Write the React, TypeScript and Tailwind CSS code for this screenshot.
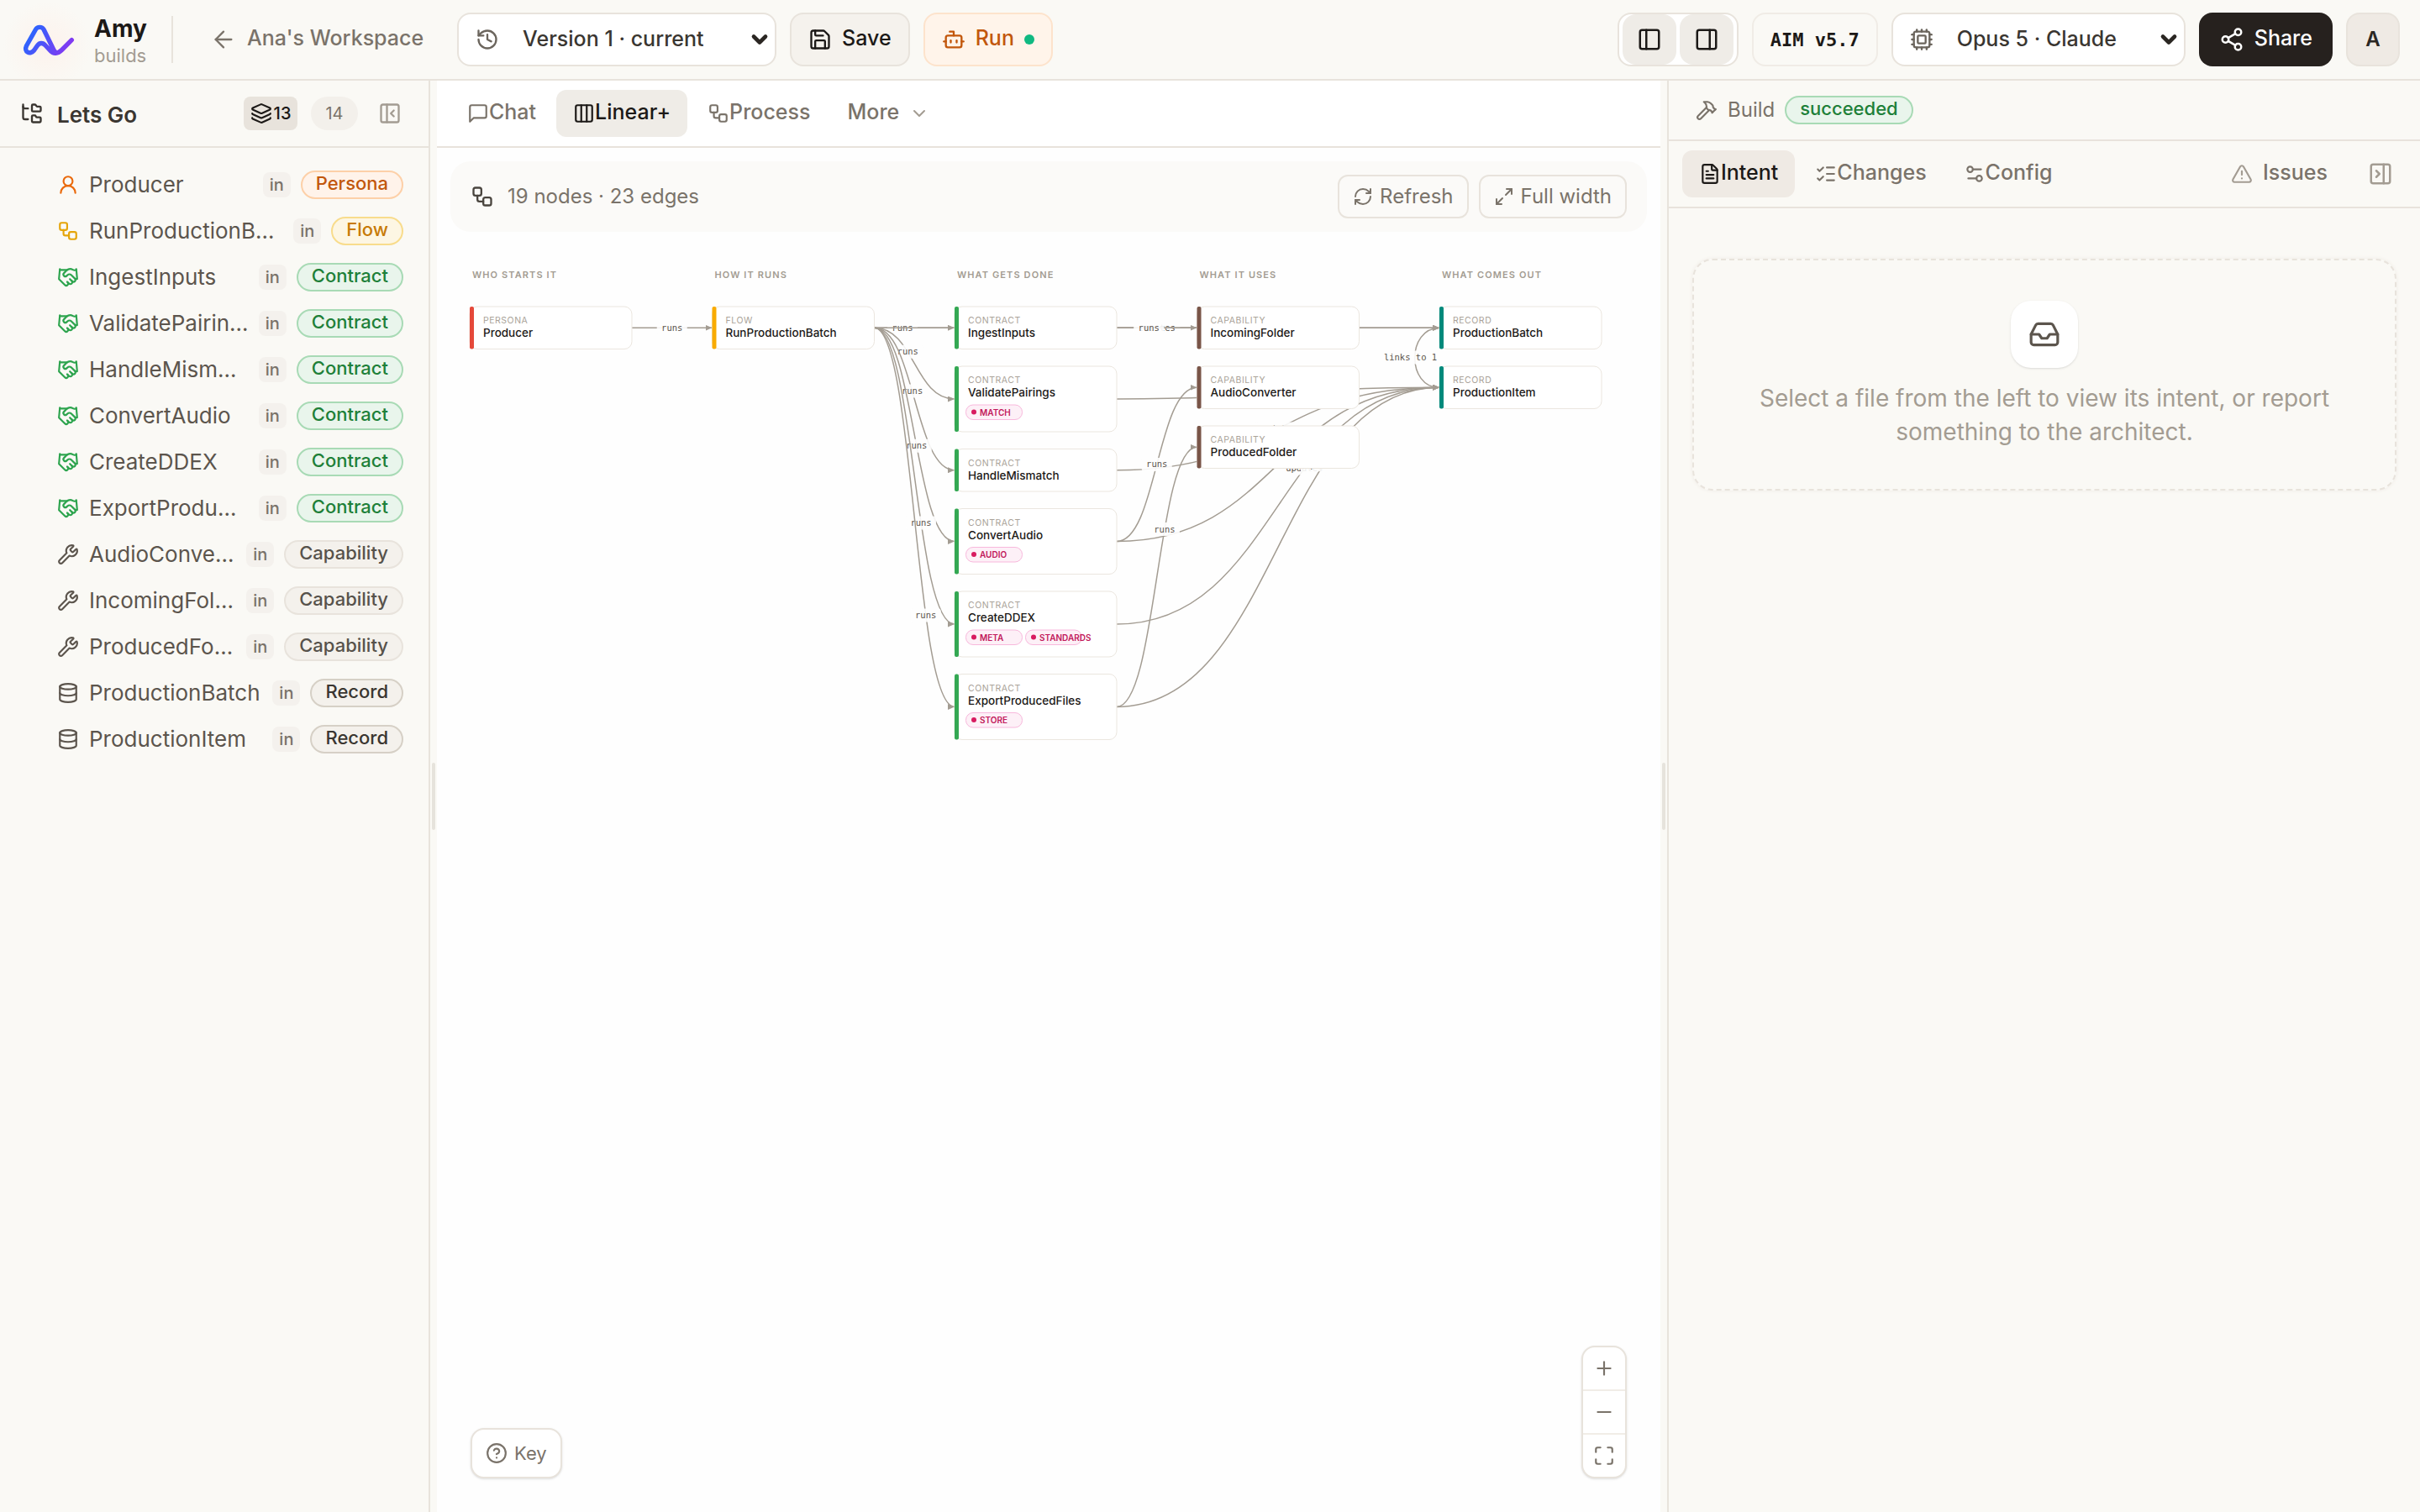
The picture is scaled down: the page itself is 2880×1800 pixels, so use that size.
import type { ReactNode } from "react";
import {
  ArrowLeft,
  Bot,
  ChevronDown,
  CircleHelp,
  Columns3,
  Cpu,
  Database,
  FileText,
  FolderTree,
  Hammer,
  Handshake,
  History,
  Inbox,
  Layers,
  ListChecks,
  Maximize,
  Maximize2,
  Minus,
  PanelLeft,
  PanelLeftClose,
  PanelRight,
  PanelRightClose,
  Plus,
  RefreshCw,
  Save,
  Settings2,
  Share2,
  TriangleAlert,
  UserRound,
  Workflow,
  Wrench,
} from "lucide-react";
import type { LucideIcon } from "lucide-react";

type Kind = "Persona" | "Flow" | "Contract" | "Capability" | "Record";

const KINDS: Record<Kind, { icon: LucideIcon; iconClass: string; badge: string; accent: string }> = {
  Persona: {
    icon: UserRound,
    iconClass: "text-[#ea6a0c]",
    badge: "border-[#fdd0a8] bg-[#fff3ea] text-[#c2570c]",
    accent: "#e5493a",
  },
  Flow: {
    icon: Workflow,
    iconClass: "text-[#e5a50a]",
    badge: "border-[#f8dc8c] bg-[#fdf6e3] text-[#c77a06]",
    accent: "#f9ab00",
  },
  Contract: {
    icon: Handshake,
    iconClass: "text-[#2da44e]",
    badge: "border-[#a8dab5] bg-[#e9f5ec] text-[#1e8039]",
    accent: "#34a853",
  },
  Capability: {
    icon: Wrench,
    iconClass: "text-[#5c554d]",
    badge: "border-[#e8e3dc] bg-[#f4f1ec] text-[#57524b]",
    accent: "#795548",
  },
  Record: {
    icon: Database,
    iconClass: "text-[#5c554d]",
    badge: "border-[#d6d0c6] bg-[#f4f1ec] text-[#3a3631]",
    accent: "#00897b",
  },
};

const FILES: { name: string; kind: Kind }[] = [
  { name: "Producer", kind: "Persona" },
  { name: "RunProductionBatch", kind: "Flow" },
  { name: "IngestInputs", kind: "Contract" },
  { name: "ValidatePairings", kind: "Contract" },
  { name: "HandleMismatch", kind: "Contract" },
  { name: "ConvertAudio", kind: "Contract" },
  { name: "CreateDDEX", kind: "Contract" },
  { name: "ExportProducedFiles", kind: "Contract" },
  { name: "AudioConverter", kind: "Capability" },
  { name: "IncomingFolder", kind: "Capability" },
  { name: "ProducedFolder", kind: "Capability" },
  { name: "ProductionBatch", kind: "Record" },
  { name: "ProductionItem", kind: "Record" },
];

/* ---------- graph data, in viewBox units ---------- */

const COL_X = [78, 655, 1232, 1809, 2386];
const COL_TITLES = ["WHO STARTS IT", "HOW IT RUNS", "WHAT GETS DONE", "WHAT IT USES", "WHAT COMES OUT"];
const NODE_W = 386;
const SHORT = 101;
const TALL = 156;

type GraphNode = { id: string; kind: Kind; col: number; y: number; tags?: string[] };

const NODES: GraphNode[] = [
  { id: "Producer", kind: "Persona", col: 0, y: 178 },
  { id: "RunProductionBatch", kind: "Flow", col: 1, y: 178 },
  { id: "IngestInputs", kind: "Contract", col: 2, y: 178 },
  { id: "ValidatePairings", kind: "Contract", col: 2, y: 320, tags: ["MATCH"] },
  { id: "HandleMismatch", kind: "Contract", col: 2, y: 517 },
  { id: "ConvertAudio", kind: "Contract", col: 2, y: 659, tags: ["AUDIO"] },
  { id: "CreateDDEX", kind: "Contract", col: 2, y: 856, tags: ["META", "STANDARDS"] },
  { id: "ExportProducedFiles", kind: "Contract", col: 2, y: 1053, tags: ["STORE"] },
  { id: "IncomingFolder", kind: "Capability", col: 3, y: 178 },
  { id: "AudioConverter", kind: "Capability", col: 3, y: 320 },
  { id: "ProducedFolder", kind: "Capability", col: 3, y: 462 },
  { id: "ProductionBatch", kind: "Record", col: 4, y: 178 },
  { id: "ProductionItem", kind: "Record", col: 4, y: 320 },
];

// t is where along the curve the label sits
type Edge = { from: string; to: string; label: string; t: number };

const EDGES: Edge[] = [
  { from: "Producer", to: "RunProductionBatch", label: "runs", t: 0.5 },
  { from: "RunProductionBatch", to: "IngestInputs", label: "runs", t: 0.31 },
  { from: "RunProductionBatch", to: "ValidatePairings", label: "runs", t: 0.39 },
  { from: "RunProductionBatch", to: "HandleMismatch", label: "runs", t: 0.463 },
  { from: "RunProductionBatch", to: "ConvertAudio", label: "runs", t: 0.535 },
  { from: "RunProductionBatch", to: "CreateDDEX", label: "runs", t: 0.607 },
  { from: "RunProductionBatch", to: "ExportProducedFiles", label: "runs", t: 0.68 },
  { from: "RunProductionBatch", to: "ProductionBatch", label: "creates", t: 0.5 },
  { from: "IngestInputs", to: "ProductionBatch", label: "updates", t: 0.6 },
  { from: "IngestInputs", to: "IncomingFolder", label: "runs", t: 0.37 },
  { from: "ValidatePairings", to: "ProductionItem", label: "updates", t: 0.5 },
  { from: "HandleMismatch", to: "ProductionItem", label: "updates", t: 0.5 },
  { from: "ConvertAudio", to: "ProductionItem", label: "updates", t: 0.55 },
  { from: "ConvertAudio", to: "AudioConverter", label: "runs", t: 0.5 },
  { from: "CreateDDEX", to: "ProductionItem", label: "updates", t: 0.607 },
  { from: "ExportProducedFiles", to: "ProductionItem", label: "updates", t: 0.68 },
  { from: "ExportProducedFiles", to: "ProducedFolder", label: "runs", t: 0.625 },
];

const nodeHeight = (n: GraphNode) => (n.tags ? TALL : SHORT);
const nodeMid = (n: GraphNode) => n.y + nodeHeight(n) / 2;
const findNode = (id: string) => NODES.find((n) => n.id === id)!;

function EdgeLabel({ x, y, text }: { x: number; y: number; text: string }) {
  const w = text.length * 13 + 20;
  return (
    <g>
      <rect x={x - w / 2} y={y - 16} width={w} height={32} rx={6} fill="#fefefe" fillOpacity={0.9} />
      <text
        x={x}
        y={y + 7}
        textAnchor="middle"
        fill="#5c554d"
        className="font-['DejaVu_Sans_Mono',monospace] text-[21px]"
      >
        {text}
      </text>
    </g>
  );
}

function EdgePath({ edge }: { edge: Edge }) {
  const a = findNode(edge.from);
  const b = findNode(edge.to);
  const x1 = COL_X[a.col] + NODE_W;
  const x2 = COL_X[b.col];
  const y1 = nodeMid(a);
  const y2 = nodeMid(b);
  const mx = (x1 + x2) / 2;
  const { t } = edge;
  const lx = x1 + (x2 - x1) * (1.5 * t * (1 - t) + t ** 3);
  const ly = y1 + (y2 - y1) * (3 * t ** 2 - 2 * t ** 3);
  return (
    <g>
      <path
        d={`M${x1} ${y1} C${mx} ${y1} ${mx} ${y2} ${x2} ${y2}`}
        fill="none"
        stroke="#a39c92"
        strokeWidth={3}
        markerEnd="url(#arrow)"
      />
      <EdgeLabel x={lx} y={ly} text={edge.label} />
    </g>
  );
}

function NodeCard({ node }: { node: GraphNode }) {
  const x = COL_X[node.col];
  const h = nodeHeight(node);
  return (
    <g>
      <rect x={x} y={node.y} width={NODE_W} height={h} rx={18} fill="#fff" stroke="#ebe6df" strokeWidth={2} />
      <rect x={x} y={node.y} width={10} height={h} rx={4} fill={KINDS[node.kind].accent} />
      <text x={x + 32} y={node.y + 40} fill="#aaa399" className="text-[21px] tracking-wider">
        {node.kind.toUpperCase()}
      </text>
      <text x={x + 32} y={node.y + 72} fill="#1c1917" className="text-[27px] font-medium">
        {node.id}
      </text>
      {node.tags?.map((tag, i) => (
        <g key={tag}>
          <rect
            x={x + 27 + i * 142}
            y={node.y + 92}
            width={134}
            height={35}
            rx={17}
            fill="#fdf0f7"
            stroke="#f8b8dc"
            strokeWidth={2}
          />
          <circle cx={x + 46 + i * 142} cy={node.y + 109} r={6} fill="#d81b60" />
          <text x={x + 60 + i * 142} y={node.y + 117} fill="#c2185b" className="text-[20px] font-semibold">
            {tag}
          </text>
        </g>
      ))}
    </g>
  );
}

function Graph() {
  return (
    <svg viewBox="0 0 2912 1300" className="block w-full" role="img" aria-label="Build graph">
      <defs>
        <marker
          id="arrow"
          viewBox="0 0 16 14"
          refX="16"
          refY="7"
          markerWidth="16"
          markerHeight="14"
          markerUnits="userSpaceOnUse"
          orient="auto"
        >
          <path d="M0 0L16 7L0 14z" fill="#a39c92" />
        </marker>
      </defs>
      {COL_TITLES.map((title, i) => (
        <text key={title} x={COL_X[i] + 6} y={110} fill="#a39c92" className="text-[22px] font-semibold tracking-widest">
          {title}
        </text>
      ))}
      {EDGES.map((e) => (
        <EdgePath key={e.from + e.to} edge={e} />
      ))}
      <path
        d="M2386 371 C2308 371 2308 229 2386 229"
        fill="none"
        stroke="#a39c92"
        strokeWidth={3}
        markerEnd="url(#arrow)"
      />
      <EdgeLabel x={2317} y={299} text="links to 1" />
      {NODES.map((n) => (
        <NodeCard key={n.id} node={n} />
      ))}
    </svg>
  );
}

function Logo() {
  return (
    <svg viewBox="0 0 72 48" className="h-12 w-[72px]" aria-hidden="true">
      <defs>
        <linearGradient id="logo" x1="8" y1="8" x2="60" y2="40" gradientUnits="userSpaceOnUse">
          <stop offset="0" stopColor="#1f6bff" />
          <stop offset="1" stopColor="#8b35f0" />
        </linearGradient>
      </defs>
      <path
        d="M61.3 24.7L49.5 36.5C45 41 39.5 41.5 36 37.5L30 31C27 27.6 23 27.6 20.3 31.5L16.5 37C12 42.5 4 39 7.5 31.5L18.5 12C20.5 8.5 26 8.5 28 12L38.5 33.5C39.5 36 41 38.5 43 40"
        fill="none"
        stroke="url(#logo)"
        strokeWidth="5.4"
        strokeLinecap="round"
        strokeLinejoin="round"
      />
    </svg>
  );
}

function MessageIcon() {
  return (
    <svg
      viewBox="0 0 24 24"
      className="size-[26px]"
      fill="none"
      stroke="currentColor"
      strokeWidth="2"
      strokeLinecap="round"
      strokeLinejoin="round"
      aria-hidden="true"
    >
      <path d="M21 15a2 2 0 0 1-2 2H7l-4 4V5a2 2 0 0 1 2-2h14a2 2 0 0 1 2 2z" />
    </svg>
  );
}

function SelectBox({ label, icon, value, className }: { label: string; icon: ReactNode; value: string; className: string }) {
  return (
    <label
      className={`relative flex h-16 items-center rounded-2xl border-2 border-[#e8e3dc] bg-white pl-5 text-[#6b655d] ${className}`}
    >
      {icon}
      <select
        aria-label={label}
        className="h-full w-full flex-1 appearance-none bg-transparent pl-7 text-[25px] font-medium text-[#3a3631] outline-none"
      >
        <option>{value}</option>
      </select>
      <ChevronDown className="pointer-events-none absolute right-1 size-7 text-[#2b2723]" strokeWidth={4} />
    </label>
  );
}

function Header() {
  return (
    <header className="flex h-24 shrink-0 items-center border-b-2 border-[#e8e3dc] bg-[radial-gradient(circle_at_56px_54px,#fdf2ec_0,#faf9f5_52px)] px-6">
      <Logo />
      <div className="ml-4 w-[92px] pt-1.5">
        <p className="text-[28px] leading-8 font-bold text-[#1c1917]">Amy</p>
        <p className="text-[22px] leading-8 text-[#a39c92]">builds</p>
      </div>
      <div className="h-14 w-0.5 bg-[#e8e3dc]" />
      <a href="#" className="ml-11 flex items-center gap-3 text-[25px] font-medium text-[#7a736a]">
        <ArrowLeft size={32} strokeWidth={1.75} />
        <span className="pb-0.5">Ana's Workspace</span>
      </a>
      <SelectBox label="Version" icon={<History size={28} />} value="Version 1 · current" className="ml-10 w-[380px]" />
      <button className="ml-4 flex h-16 items-center gap-3 rounded-2xl border-2 border-[#e8e3dc] bg-[#f5f2ed] px-5 text-[25px] font-medium text-[#1c1917]">
        <Save size={28} />
        <span className="pb-0.5">Save</span>
      </button>
      <button className="ml-4 flex h-16 items-center gap-3 rounded-2xl border-2 border-[#fde3cc] bg-[#fff4ea] px-5 text-[25px] font-medium text-[#c2570c]">
        <Bot size={28} />
        <span className="pb-0.5">Run</span>
        <span className="size-3 rounded-full bg-[#10b981]" />
      </button>

      <div className="ml-auto flex items-center gap-4">
        <div className="flex h-16 gap-1 rounded-2xl border-2 border-[#e8e3dc] bg-white px-1 text-[#1c1917]">
          <button aria-label="Toggle left panel" className="flex w-16 items-center justify-center rounded-2xl bg-[#efece7]">
            <PanelLeft size={30} />
          </button>
          <button aria-label="Toggle right panel" className="flex w-16 items-center justify-center rounded-2xl bg-[#efece7]">
            <PanelRight size={30} />
          </button>
        </div>
        <span className="flex h-16 items-center rounded-2xl border-2 border-[#f0ece6] px-5 font-['DejaVu_Sans_Mono',monospace] text-[22px] font-bold text-[#1c1917]">
          AIM v5.7
        </span>
        <SelectBox label="Model" icon={<Cpu size={28} />} value="Opus 5 · Claude" className="w-[350px]" />
        <button className="flex h-16 items-center gap-3 rounded-2xl bg-[#26211e] px-6 text-[25px] font-medium text-white">
          <Share2 size={30} />
          <span className="pb-0.5">Share</span>
        </button>
        <button className="size-16 rounded-2xl border-2 border-[#e8e3dc] bg-[#efeae4] text-2xl font-semibold text-[#2b2723]">
          A
        </button>
      </div>
    </header>
  );
}

function Sidebar() {
  return (
    <aside className="flex w-[512px] shrink-0 flex-col border-r-2 border-[#e8e3dc]">
      <div className="flex h-20 items-center border-b-2 border-[#e8e3dc] pr-8 pl-6 text-[#3a3631]">
        <FolderTree size={28} />
        <h2 className="ml-4 flex-1 pt-0.5 text-[26px] font-semibold">Lets Go</h2>
        <button className="flex h-10 w-16 items-center justify-center gap-0.5 rounded-lg bg-[#e8e3dc] text-xl font-medium text-[#1c1917]">
          <Layers size={26} />
          13
        </button>
        <span className="ml-4 flex h-10 w-14 items-center justify-center rounded-full bg-[#f3f0eb] text-xl text-[#7a736a]">
          14
        </span>
        <button aria-label="Collapse sidebar" className="ml-6 text-[#a39c92]">
          <PanelLeftClose size={28} />
        </button>
      </div>
      <ul className="pt-4">
        {FILES.map(({ name, kind }) => {
          const { icon: Icon, iconClass, badge } = KINDS[kind];
          return (
            <li key={name}>
              <button className="flex h-[55px] w-full items-center gap-3 pr-[30px] pl-[68px] text-left">
                <Icon size={26} className={`shrink-0 ${iconClass}`} />
                <span className="min-w-0 flex-1 truncate text-[26px] text-[#5c554d]">{name}</span>
                <span className="flex h-[30px] items-center rounded-lg bg-[#f4f1ed] px-2 text-xl font-medium text-[#7a736a]">
                  in
                </span>
                <span
                  className={`flex h-[34px] items-center rounded-full border-2 px-4 pb-0.5 text-[22px] font-medium ${badge}`}
                >
                  {kind}
                </span>
              </button>
            </li>
          );
        })}
      </ul>
    </aside>
  );
}

function ResizeHandle() {
  return (
    <div className="flex w-2 shrink-0 items-center justify-center bg-[#faf9f5]">
      <div className="h-20 w-1 rounded-full bg-[#e6e3dc]" />
    </div>
  );
}

const TAB = "flex h-14 items-center rounded-xl px-5 text-[25px] font-medium";

function Center() {
  return (
    <main className="flex min-w-0 flex-1 flex-col bg-[#fefefe]">
      <nav className="flex h-20 items-center gap-1 border-b-2 border-[#e8e3dc] bg-white px-4 text-[#7a736a]">
        <button className={TAB}>
          <MessageIcon />
          <span className="pb-0.5">Chat</span>
        </button>
        <button className={`${TAB} bg-[#efece7] text-[#1c1917]`}>
          <Columns3 size={26} />
          <span className="pb-0.5">Linear+</span>
        </button>
        <button className={TAB}>
          <Workflow size={26} />
          <span className="pb-0.5">Process</span>
        </button>
        <button className={`${TAB} gap-3`}>
          <span className="pb-0.5">More</span>
          <ChevronDown size={24} className="text-[#a39c92]" />
        </button>
      </nav>

      <div className="mx-4 mt-4 flex h-[84px] items-center gap-3 rounded-3xl bg-[#fbfaf8] px-6 text-2xl text-[#7a736a]">
        <Workflow size={28} className="text-[#4a453f]" />
        <p className="flex-1 pl-1">19 nodes · 23 edges</p>
        <button className="flex h-[52px] items-center gap-2 rounded-xl border-2 border-[#e8e3dc] px-4">
          <RefreshCw size={24} />
          Refresh
        </button>
        <button className="flex h-[52px] items-center gap-2 rounded-xl border-2 border-[#e8e3dc] px-4">
          <Maximize2 size={24} />
          Full width
        </button>
      </div>

      <div className="relative flex-1">
        <Graph />
        <button className="absolute bottom-10 left-10 flex h-[60px] items-center gap-2 rounded-2xl border-2 border-[#e8e3dc] bg-white px-4 text-[22px] text-[#7a736a] shadow-sm">
          <CircleHelp size={26} />
          Key
        </button>
        <div className="absolute right-10 bottom-10 flex w-[54px] flex-col divide-y-2 divide-[#f1ede7] overflow-hidden rounded-2xl border-2 border-[#e8e3dc] bg-white text-[#7a736a] shadow-sm">
          <button aria-label="Zoom in" className="flex h-[52px] items-center justify-center">
            <Plus size={26} />
          </button>
          <button aria-label="Zoom out" className="flex h-[52px] items-center justify-center">
            <Minus size={26} />
          </button>
          <button aria-label="Fit to screen" className="flex h-[50px] items-center justify-center">
            <Maximize size={26} />
          </button>
        </div>
      </div>
    </main>
  );
}

function Inspector() {
  return (
    <aside className="w-[896px] shrink-0 border-l-2 border-[#e8e3dc] text-[#7a736a]">
      <div className="flex h-[72px] items-center border-b-2 border-[#e8e3dc] px-8 text-2xl">
        <Hammer size={26} />
        <span className="ml-3">Build</span>
        <span className="ml-3 flex h-[34px] items-center rounded-full border-2 border-[#a8dab5] bg-[#e9f5ec] px-4 pb-0.5 text-[22px] font-medium text-[#1e8039]">
          succeeded
        </span>
      </div>
      <nav className="flex h-20 items-center gap-1 border-b-2 border-[#e8e3dc] px-4">
        <button className={`${TAB} bg-[#efeae4] text-[#1c1917]`}>
          <FileText size={26} />
          <span className="pb-0.5">Intent</span>
        </button>
        <button className={TAB}>
          <ListChecks size={26} />
          <span className="pb-0.5">Changes</span>
        </button>
        <button className={TAB}>
          <Settings2 size={26} />
          <span className="pb-0.5">Config</span>
        </button>
        <button className={`${TAB} ml-auto gap-3`}>
          <TriangleAlert size={26} className="text-[#a39c92]" />
          <span className="pb-0.5">Issues</span>
        </button>
        <button aria-label="Collapse inspector" className="mr-4 ml-6 text-[#a39c92]">
          <PanelRightClose size={30} />
        </button>
      </nav>
      <div className="mx-7 mt-[60px] flex h-[276px] flex-col items-center rounded-3xl border-2 border-dashed border-[#e8e3dc] px-16 pt-12 shadow-[0_0_4px_#efebe5]">
        <div className="flex size-20 items-center justify-center rounded-3xl bg-white text-[#5c554d] shadow-sm">
          <Inbox size={38} />
        </div>
        <p className="mt-4 text-center text-[28px] leading-10 text-[#a39c92]">
          Select a file from the left to view its intent, or report something to the architect.
        </p>
      </div>
    </aside>
  );
}

export default function App() {
  return (
    <div className="flex min-h-screen flex-col bg-[#faf9f5] font-['Inter',sans-serif] whitespace-nowrap [&_p]:whitespace-normal">
      <Header />
      <div className="flex flex-1">
        <Sidebar />
        <ResizeHandle />
        <Center />
        <ResizeHandle />
        <Inspector />
      </div>
    </div>
  );
}
